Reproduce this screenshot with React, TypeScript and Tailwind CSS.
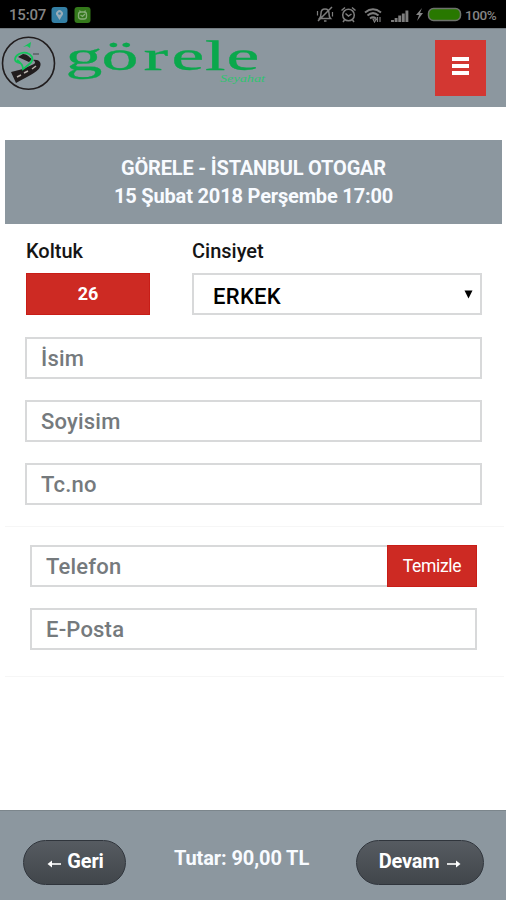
import type { ReactNode } from "react";

const inputClass =
  "h-[42px] w-full border-2 border-[#d8d9da] bg-white px-[14px] pt-px text-[22px] font-medium tracking-[0.2px] text-black outline-none placeholder:text-[#757a7d] placeholder:opacity-100";

function StatusBar() {
  return (
    <div className="flex h-7 items-center bg-black pl-[9px] pr-2 text-[#858585]">
      <span className="w-[42px] pt-[3px] text-[15px] font-medium leading-none tracking-[-0.2px]">15:07</span>
      <svg className="mt-0.5" width="40" height="18" viewBox="0 0 40 18">
        <rect x="0.500" y="1" width="16" height="16" rx="3" fill="#347fa4" />
        <path d="M8.500 14 5.900 9.800a3.400 3.400 0 1 1 5.200 0Z" fill="#9aadb8" />
        <circle cx="8.500" cy="7.500" r="1.300" fill="#347fa4" />
        <rect x="23.500" y="1" width="16" height="16" rx="3" fill="#34791b" />
        <g fill="none" stroke="#86ad78" strokeWidth="1.300">
          <rect x="27.500" y="6" width="8" height="7" rx="2.500" />
          <path d="m28.500 4.500 1 1.500m5-1.500-1 1.500m-4 3 2 1.500L34 8" />
        </g>
      </svg>
      <div className="ml-auto flex items-center">
        <svg width="151" height="18" viewBox="-4 0 151 18" fill="none" stroke="#7d7d7d" strokeWidth="1.500">
          {/* muted bell */}
          <path d="M3.500 13.500C5 12 5 11 5 8.500 5 5.500 6.500 4 9 4s4 1.500 4 4.500c0 2.500 0 3.500 1.500 5ZM8 16h2.500M2 16 16 2" />
          <path d="M1.500 6v4.500M16.500 7v4.500" strokeWidth="1.200" />
          {/* alarm */}
          <circle cx="32.500" cy="10" r="5.800" />
          <path d="m25.500 5.500 3.500-3m7 0 3.500 3M29.500 8.500l3 2.500 3-2M28.500 15 27 17M36.500 15l1.500 2" />
          {/* wifi */}
          <path d="M49 7.500c5-4 11-4 16 0M51.500 10.500c3.500-3 7.500-3 11 0M54 13.500c2-1.600 4-1.600 6 0" strokeWidth="2" />
          <path d="m57 14 1.500 3 2-3ZM61.500 17v-5m2.500 5v-5" strokeWidth="1.200" />
          {/* signal */}
          <path d="M76.500 17v-2m3.600 2v-4m3.600 4v-6.500m3.600 6.500V8.500M90.900 17V5.500" strokeWidth="2.900" />
          <path d="m106 3-6 7h3l-2 6 6-8h-3l2-5Z" fill="#858585" stroke="none" />
          <rect x="112.500" y="3.500" width="32" height="12" rx="5" fill="#287800" stroke="#6d726b" />
        </svg>
        <span className="ml-0.5 w-[33px] pt-[3px] text-[13.5px] font-medium leading-none tracking-[-0.4px]">100%</span>
      </div>
    </div>
  );
}

function Logo() {
  return (
    <svg className="h-[79px] w-[280px]" viewBox="0 29 280 79">
      <circle cx="28.500" cy="63.300" r="26" fill="none" stroke="#211d1e" strokeWidth="1.600" />
      {/* road */}
      <path d="m11 72 12-3 11-5c2-1 1-3-1-4 6-1 9 3 7 7-2 5-15 11-24 16Z" fill="#211d1e" />
      <path d="m18 57 5-3c4 0 6 3 9 5l-3 3Z" fill="#211d1e" />
      <path d="m17 77 4-2m3-2 4-2m4-2 4-3" stroke="#b9b2ad" strokeWidth="1.500" />
      <path d="M33 54h6" stroke="#3f4447" />
      <path
        d="M20 63c-7-1-6-6-1-9 5-3 11-1 13 3 2 5-4 8-9 12 0-4-3-7-6-9"
        fill="none"
        stroke="#13c45b"
        strokeWidth="1.800"
      />
      <path d="m23 47 8-5-1 6-3-2Z" fill="#13c45b" />
      <text
        transform="scale(1.72 1)"
        x="38.1 59 83.400 99.700 119.200 131.700"
        y="70.500"
        fontFamily="Liberation Serif, serif"
        fontSize="43"
        fill="#0aa84c"
        stroke="#0aa84c"
        strokeWidth="0.300"
      >
        görele
      </text>
      <text
        x="220"
        y="81.500"
        fontFamily="Liberation Serif, serif"
        fontStyle="italic"
        fontSize="11"
        fill="#2fc46f"
        textLength="45"
        lengthAdjust="spacingAndGlyphs"
      >
        Seyahat
      </text>
    </svg>
  );
}

function PillButton({ className, children }: { className: string; children: ReactNode }) {
  return (
    <button
      className={`mt-[29px] flex h-[45px] items-center justify-center rounded-full border border-[#30353c] bg-linear-to-b from-[#565b61] to-[#41464b] pb-[3px] text-[20px] font-bold tracking-[-0.2px] text-white ${className}`}
    >
      {children}
    </button>
  );
}

function Arrow({ left = false }: { left?: boolean }) {
  return (
    <svg className="mt-[5px]" width="14" height="10" viewBox="0 0 14 10">
      <path d={left ? "M14 5H3" : "M0 5h11"} stroke="white" strokeWidth="1.600" />
      <path d={left ? "M5 1.500.500 5 5 8.500Z" : "M9 1.500 13.500 5 9 8.500Z"} fill="white" />
    </svg>
  );
}

export default function App() {
  return (
    <div className="flex h-[900px] w-[506px] flex-col overflow-hidden bg-white font-['Roboto',sans-serif]">
      <StatusBar />
      <header className="flex h-[79px] shrink-0 justify-between border-t border-[#737b81] bg-[#8c979f]">
        <Logo />
        <button className="mr-5 mt-[11px] flex h-14 w-[51px] flex-col items-center justify-center gap-[3px] bg-[#d33732] pb-[5px]">
          <span className="h-1 w-[17px] bg-white" />
          <span className="h-1 w-[17px] bg-white" />
          <span className="h-1 w-[17px] bg-white" />
        </button>
      </header>

      <main className="flex-1 pt-[33px]">
        <div className="ml-[5px] h-[84px] w-[497px] bg-[#8c979f] pt-[14px] text-center text-[20px] font-bold leading-7 tracking-[-0.17px] text-[#f8fbff]">
          <h1>GÖRELE - İSTANBUL OTOGAR</h1>
          <p>15 Şubat 2018 Perşembe 17:00</p>
        </div>

        <section className="ml-[5px] flex h-[303px] w-[499px] flex-col border-b border-[#f6f6f6] pl-5 pr-[22px]">
          <div className="flex gap-[42px] pt-[13px] text-[20px] font-medium leading-7 text-[#151515]">
            <div className="ml-px w-[124px]">
              <label>Koltuk</label>
              <div className="mt-2 flex h-[42px] items-center justify-center border border-[#c81d17] bg-[#cd2a23] text-[18px] font-bold text-white">
                26
              </div>
            </div>
            <div className="w-[290px]">
              <label>Cinsiyet</label>
              <div className="mt-2 flex h-[42px] items-center justify-between border-2 border-[#d8d9da] pl-[19px] pr-[7px] pt-1.5 text-[22px] tracking-[0.3px] text-black">
                ERKEK
                <svg className="mb-1.5" width="9" height="9" viewBox="0 0 9 9">
                  <path d="M.5.5h8l-4 8Z" />
                </svg>
              </div>
            </div>
          </div>
          <div className="flex flex-col gap-[21px] pt-[21.5px]">
            <input className={inputClass} placeholder="İsim" />
            <input className={inputClass} placeholder="Soyisim" />
            <input className={inputClass} placeholder="Tc.no" />
          </div>
        </section>

        <section className="ml-[5px] flex h-[150px] w-[499px] flex-col gap-[21px] border-b border-[#f6f6f6] pl-[25px] pr-[27px] pt-[18px]">
          <div className="flex">
            <input className={inputClass} placeholder="Telefon" />
            <button className="-ml-0.5 h-[42px] w-[90px] shrink-0 border border-[#c81d17] bg-[#cd2a23] text-[17.5px] tracking-[-0.3px] text-white">
              Temizle
            </button>
          </div>
          <input className={inputClass} placeholder="E-Posta" />
        </section>
      </main>

      <footer className="flex h-[90px] shrink-0 border-t border-[#7c868c] bg-[#8c979f] pl-[23px] pr-[22px]">
        <PillButton className="w-[103px] gap-1.5 pl-0.5">
          <Arrow left />
          Geri
        </PillButton>
        <p className="mt-[33px] flex-1 pl-px text-center text-[20px] font-bold leading-7 tracking-[-0.1px] text-[#f8fbff]">
          Tutar: 90,00 TL
        </p>
        <PillButton className="w-[128px] gap-2">
          Devam
          <Arrow />
        </PillButton>
      </footer>
    </div>
  );
}
